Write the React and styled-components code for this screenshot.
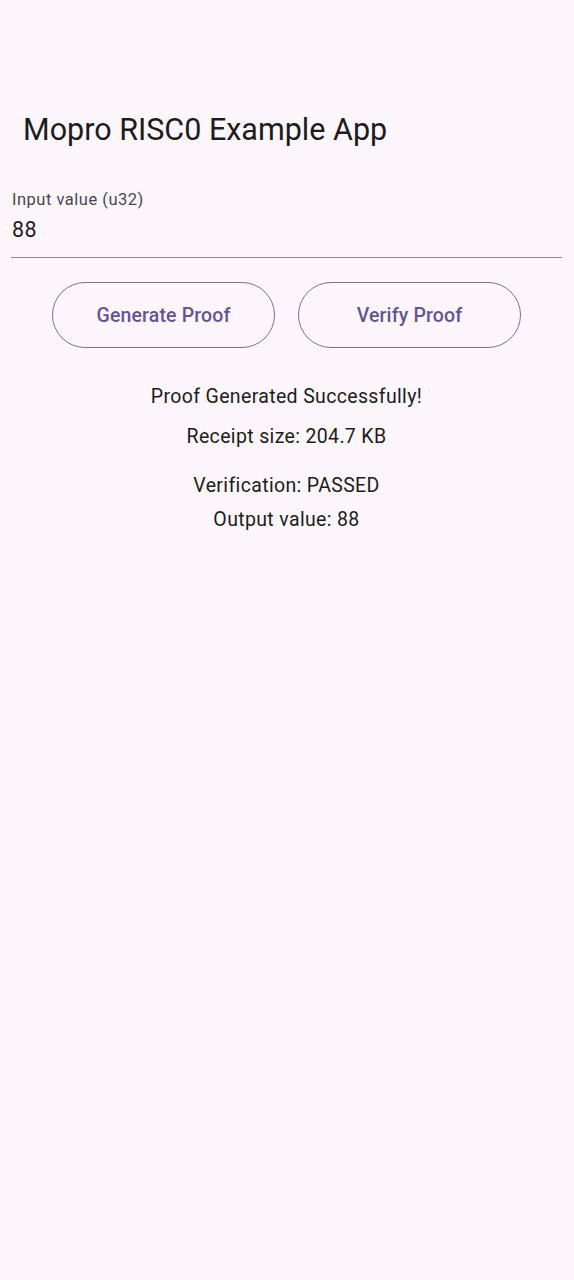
import React from 'react';
import styled, { createGlobalStyle } from 'styled-components';

const Global = createGlobalStyle`
  html, body {
    margin: 0;
    padding: 0;
    background: #fdf7fd;
  }
  body {
    font-family: Roboto, "Noto Sans", sans-serif;
    color: #1d1b20;
  }
`;

const Page = styled.div`
  min-height: 1280px;
  background: #fdf7fd;
  display: flex;
  flex-direction: column;
`;

const AppBar = styled.header`
  height: 152px;
  padding: 108px 0 0 23px;
  box-sizing: border-box;
  display: flex;
  align-items: flex-start;
`;

const Title = styled.h1`
  margin: 0;
  font-size: 30.5px;
  line-height: 44px;
  font-weight: 400;
  letter-spacing: 0;
`;

const Body = styled.main`
  padding: 0 12px 0 11px;
  display: flex;
  flex-direction: column;
`;

const Field = styled.label`
  display: flex;
  flex-direction: column;
  padding: 0 0 0 1px;
  margin-top: 39px;
  border-bottom: 1.3px solid #8f8a94;
  height: 67px;
  box-sizing: border-box;
`;

const FieldLabel = styled.span`
  font-size: 16.5px;
  line-height: 18px;
  letter-spacing: 0.5px;
  color: #49454f;
`;

const FieldValue = styled.span`
  font-size: 21.5px;
  line-height: 26px;
  letter-spacing: 0.5px;
  margin-top: 8px;
`;

const Buttons = styled.div`
  display: flex;
  justify-content: center;
  gap: 23px;
  margin-top: 24px;
`;

const OutlineButton = styled.button`
  width: 223px;
  height: 66px;
  border: 1.3px solid #79747e;
  border-radius: 33px;
  background: transparent;
  color: #65558f;
  font-family: Roboto, sans-serif;
  font-size: 19.5px;
  letter-spacing: 0.15px;
  font-weight: 500;
  padding: 0;
  cursor: pointer;
`;

const Results = styled.section`
  display: flex;
  flex-direction: column;
  align-items: center;
  margin-top: 36px;
`;

const Line = styled.p`
  margin: ${p => p.$gap || 0}px 0 0;
  font-size: 19.5px;
  line-height: 26px;
  letter-spacing: 0.35px;
  text-align: center;
`;

export default function App() {
  return (
    <Page>
      <Global />
      <AppBar>
        <Title>Mopro RISC0 Example App</Title>
      </AppBar>
      <Body>
        <Field>
          <FieldLabel>Input value (u32)</FieldLabel>
          <FieldValue>88</FieldValue>
        </Field>
        <Buttons>
          <OutlineButton>Generate Proof</OutlineButton>
          <OutlineButton>Verify Proof</OutlineButton>
        </Buttons>
        <Results>
          <Line>Proof Generated Successfully!</Line>
          <Line $gap={14}>Receipt size: 204.7 KB</Line>
          <Line $gap={23}>Verification: PASSED</Line>
          <Line $gap={8}>Output value: 88</Line>
        </Results>
      </Body>
    </Page>
  );
}
